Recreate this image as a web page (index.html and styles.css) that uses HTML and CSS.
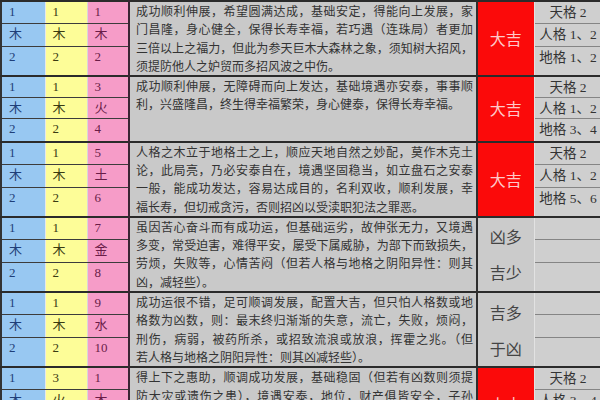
FILE: index.html
```html
<!DOCTYPE html>
<html lang="zh-CN">
<head>
<meta charset="utf-8">
<title>三才配置</title>
<link rel="stylesheet" href="styles.css">
</head>
<body>
<table class="sancai">
  <colgroup>
    <col class="c-tian"><col class="c-ren"><col class="c-di"><col class="c-desc"><col class="c-luck"><col class="c-ge">
  </colgroup>
  <tbody class="grp first">
    <tr class="r1"><td class="tian">1</td><td class="ren">1</td><td class="di">1</td>
      <td class="desc" rowspan="3"><span class="ln">成功顺利伸展，希望圆满达成，基础安定，得能向上发展，家</span><span class="ln">门昌隆，身心健全，保得长寿幸福，若巧遇（连珠局）者更加</span><span class="ln">三倍以上之福力，但此为参天巨木大森林之象，须知树大招风，</span><span class="ln end">须提防他人之妒贸而多招风波之中伤。</span></td>
      <td class="luck good" rowspan="3">大吉</td><td class="ge">天格 2</td></tr>
    <tr class="r2"><td class="tian">木</td><td class="ren">木</td><td class="di">木</td><td class="ge">人格 1、2</td></tr>
    <tr class="r3"><td class="tian">2</td><td class="ren">2</td><td class="di">2</td><td class="ge">地格 1、2</td></tr>
  </tbody>
  <tbody class="grp short">
    <tr class="r1"><td class="tian">1</td><td class="ren">1</td><td class="di">3</td>
      <td class="desc" rowspan="3"><span class="ln">成功顺利伸展，无障碍而向上发达，基础境遇亦安泰，事事顺</span><span class="ln end">利，兴盛隆昌，终生得幸福繁荣，身心健泰，保得长寿幸福。</span></td>
      <td class="luck good" rowspan="3">大吉</td><td class="ge">天格 2</td></tr>
    <tr class="r2"><td class="tian">木</td><td class="ren">木</td><td class="di">火</td><td class="ge">人格 1、2</td></tr>
    <tr class="r3"><td class="tian">2</td><td class="ren">2</td><td class="di">4</td><td class="ge">地格 3、4</td></tr>
  </tbody>
  <tbody class="grp">
    <tr class="r1"><td class="tian">1</td><td class="ren">1</td><td class="di">5</td>
      <td class="desc" rowspan="3"><span class="ln">人格之木立于地格土之上，顺应天地自然之妙配，莫作木克土</span><span class="ln">论，此局亮，乃必安泰自在，境遇坚固稳当，如立盘石之安泰</span><span class="ln">一般，能成功发达，容易达成目的，名利双收，顺利发展，幸</span><span class="ln end">福长寿，但切戒贪污，否则招凶以受渎职犯法之罪恶。</span></td>
      <td class="luck good" rowspan="3">大吉</td><td class="ge">天格 2</td></tr>
    <tr class="r2"><td class="tian">木</td><td class="ren">木</td><td class="di">土</td><td class="ge">人格 1、2</td></tr>
    <tr class="r3"><td class="tian">2</td><td class="ren">2</td><td class="di">6</td><td class="ge">地格 5、6</td></tr>
  </tbody>
  <tbody class="grp">
    <tr class="r1"><td class="tian">1</td><td class="ren">1</td><td class="di">7</td>
      <td class="desc" rowspan="3"><span class="ln">虽因苦心奋斗而有成功运，但基础运劣，故伸张无力，又境遇</span><span class="ln">多变，常受迫害，难得平安，屡受下属威胁，为部下而致损失，</span><span class="ln">劳烦，失败等，心情苦闷（但若人格与地格之阴阳异性：则其</span><span class="ln end">凶，减轻些）。</span></td>
      <td class="luck mixed" rowspan="3">凶多<br>吉少</td><td class="ge"></td></tr>
    <tr class="r2"><td class="tian">木</td><td class="ren">木</td><td class="di">金</td><td class="ge"></td></tr>
    <tr class="r3"><td class="tian">2</td><td class="ren">2</td><td class="di">8</td><td class="ge"></td></tr>
  </tbody>
  <tbody class="grp">
    <tr class="r1"><td class="tian">1</td><td class="ren">1</td><td class="di">9</td>
      <td class="desc" rowspan="3"><span class="ln">成功运很不错，足可顺调发展，配置大吉，但只怕人格数或地</span><span class="ln">格数为凶数，则：最末终归渐渐的失意，流亡，失败，烦闷，</span><span class="ln">刑伤，病弱，被药所杀，或招致流浪或放浪，挥霍之兆。（但</span><span class="ln end">若人格与地格之阴阳异性：则其凶减轻些）。</span></td>
      <td class="luck mixed" rowspan="3">吉多<br>于凶</td><td class="ge"></td></tr>
    <tr class="r2"><td class="tian">木</td><td class="ren">木</td><td class="di">水</td><td class="ge"></td></tr>
    <tr class="r3"><td class="tian">2</td><td class="ren">2</td><td class="di">10</td><td class="ge"></td></tr>
  </tbody>
  <tbody class="grp">
    <tr class="r1"><td class="tian">1</td><td class="ren">3</td><td class="di">1</td>
      <td class="desc" rowspan="3"><span class="ln">得上下之惠助，顺调成功发展，基础稳固（但若有凶数则须提</span><span class="ln">防大灾或遗伤之患），境遇安泰，地位，财产俱皆安全，子孙</span><span class="ln end">繁荣，长寿幸福。</span></td>
      <td class="luck good" rowspan="3">大吉</td><td class="ge">天格 2</td></tr>
    <tr class="r2"><td class="tian">木</td><td class="ren">火</td><td class="di">木</td><td class="ge">人格 3、4</td></tr>
    <tr class="r3"><td class="tian">2</td><td class="ren">4</td><td class="di">2</td><td class="ge">地格 1、2</td></tr>
  </tbody>
</table>
</body>
</html>
```

FILE: styles.css
```css
html, body {
  margin: 0;
  padding: 0;
  width: 600px;
  height: 400px;
  overflow: hidden;
  background: #ffffff;
}

.sancai {
  border-collapse: collapse;
  table-layout: fixed;
  width: 601px;
  font-family: "Liberation Serif", "Noto Sans CJK SC", serif;
  border-top: 1px solid #555555;
  border-left: 2px solid #333333;
}

.c-tian { width: 44px; }
.c-ren { width: 42px; }
.c-di { width: 42px; }
.c-desc { width: 348px; }
.c-luck { width: 57px; }
.c-ge { width: 68px; }

.grp { border-top: 2px solid #2b2b2b; }

.r1 { height: 22px; }
.r2 { height: 22px; }
.r3 { height: 29px; }
.short .r1 { height: 21px; }
.short .r2 { height: 21px; }
.short .r3 { height: 23px; }

.sancai td {
  padding: 0 0 0 7px;
  vertical-align: top;
  font-size: 13px;
  line-height: 19px;
  border: 1px solid #3c3c3c;
}

.tian {
  background: #98c8f2;
  color: #1f3f78;
  border-right-color: #e8e8e8 !important;
}

.ren {
  background: #fdfd98;
  color: #3a3a12;
  border-right-color: #d8d8d8 !important;
}

.di {
  background: #f69cc8;
  color: #6a1c48;
}

.sancai td.di { border-right: 2px solid #3a2434; }

.sancai td.desc {
  background: #c9c9c9;
  color: #333333;
  font-family: "Noto Sans CJK SC", sans-serif;
  font-size: 12px;
  line-height: 18.3px;
  padding: 0 3px 0 6px;
  border-right: 2px solid #2e2e2e;
}

.ln {
  display: block;
  text-align: justify;
  text-align-last: justify;
}

.ln.end {
  text-align-last: left;
}

.sancai td.luck {
  padding: 0;
  text-align: center;
  vertical-align: middle;
  font-family: "Noto Sans CJK SC", sans-serif;
  font-size: 16px;
  border-right: 1px solid #e2e2e2;
}

.good {
  background: #fb0a0a;
  color: #ffc9c9;
}

.sancai td.mixed {
  background: #cbcbcb;
  color: #444444;
  line-height: 36px;
}

.sancai td.ge {
  background: #cfcfcf;
  color: #333333;
  text-align: center;
  white-space: nowrap;
  font-size: 13.5px;
  padding: 1px 0 0 0;
  border-top-color: #858585;
  border-bottom-color: #858585;
  border-right-color: #cfcfcf;
}
```
